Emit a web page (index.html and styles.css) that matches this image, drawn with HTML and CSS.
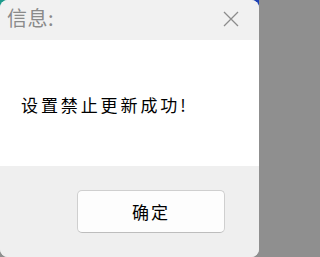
FILE: index.html
```html
<!DOCTYPE html>
<html lang="zh">
<head>
<meta charset="utf-8">
<link rel="stylesheet" href="styles.css">
</head>
<body>
<div class="dialog">
  <div class="titlebar">
    <span class="title">信息:</span>
    <svg class="close" width="16" height="16" viewBox="0 0 16 16"><path d="M1 1 L15 15 M15 1 L1 15" stroke="#8c8c8c" stroke-width="1.3" fill="none"/></svg>
  </div>
  <div class="content">
    <p class="message">设置禁止更新成功!</p>
  </div>
  <div class="footer">
    <button class="btn">确定</button>
  </div>
</div>
</body>
</html>
```

FILE: styles.css
```css
html, body {
  margin: 0;
  padding: 0;
}
html {
  background: #8f8f8f;
}
body {
  width: 259px;
  height: 257px;
  overflow: hidden;
  background:
    linear-gradient(to right, #1e9b8c, #2a6fb0 80%, #1c3fb5) top / 100% 50% no-repeat,
    #8f8f8f;
  font-family: "Noto Sans CJK SC", "Noto Sans", sans-serif;
}
.dialog {
  width: 259px;
  height: 257px;
  border-radius: 8px;
  overflow: hidden;
  display: flex;
  flex-direction: column;
  background: #efefef;
}
.titlebar {
  height: 40px;
  flex: none;
  display: flex;
  align-items: center;
  justify-content: space-between;
  padding: 0 20px 0 7px;
  background: #f1f1f1;
}
.title {
  font-size: 20px;
  color: #8a8a8a;
  line-height: 1;
  margin-top: -5px;
  letter-spacing: 0.5px;
}
.close {
  display: block;
  margin-top: -3px;
}
.content {
  height: 126px;
  flex: none;
  background: #ffffff;
  display: flex;
  align-items: center;
  padding-left: 21px;
}
.message {
  margin: 0;
  font-size: 17px;
  letter-spacing: 2.9px;
  color: #000000;
  line-height: 1;
  margin-top: 2px;
}
.footer {
  flex: 1;
  background: #efefef;
  padding: 24px 0 0 77px;
}
.btn {
  display: block;
  width: 148px;
  height: 43px;
  border: 1px solid #cfcfcf;
  border-bottom-color: #bdbdbd;
  border-radius: 5px;
  background: #fdfdfd;
  font-family: "Noto Sans CJK SC", "Noto Sans", sans-serif;
  font-size: 17px;
  color: #000000;
  padding: 0;
  letter-spacing: 2px;
}
```
